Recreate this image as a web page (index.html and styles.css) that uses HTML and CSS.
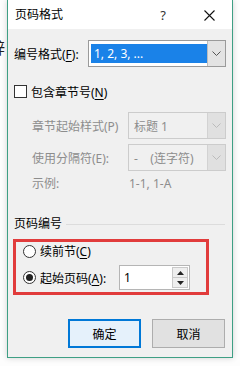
FILE: index.html
```html
<!DOCTYPE html>
<html lang="zh-CN">
<head>
    <meta charset="UTF-8">
    <title>页码格式</title>
    <link rel="stylesheet" href="styles.css">
</head>
<body>
    <div class="behind"><span>辞</span></div>
    <div class="dialog">
        <div class="titlebar">
            <span class="title">页码格式</span>
            <span class="tbtn help">?</span>
            <span class="tbtn close">
                <svg width="11" height="11" viewBox="0 0 11 11"><path d="M0.5 0.5 L10.5 10.5 M10.5 0.5 L0.5 10.5" stroke="#111" stroke-width="1.1" fill="none"/></svg>
            </span>
        </div>
        <div class="content">
            <div class="row first">
                <span class="label">编号格式(<u>F</u>):</span>
                <div class="combo focused">
                    <span class="value selected">1, 2, 3, ...</span>
                    <span class="arrow">
                        <svg width="9" height="5" viewBox="0 0 9 5"><path d="M0.5 0.5 L4.5 4.5 L8.5 0.5" stroke="#555" fill="none"/></svg>
                    </span>
                </div>
            </div>

            <div class="check-row">
                <span class="checkbox"></span>
                <span>包含章节号(<u>N</u>)</span>
            </div>

            <div class="sub">
                <div class="row">
                    <span class="label wide">章节起始样式(P)</span>
                    <div class="combo disabled">
                        <span class="value">标题 1</span>
                        <span class="arrow">
                            <svg width="9" height="5" viewBox="0 0 9 5"><path d="M0.5 0.5 L4.5 4.5 L8.5 0.5" stroke="#bbb" fill="none"/></svg>
                        </span>
                    </div>
                </div>
                <div class="row second">
                    <span class="label wide">使用分隔符(E):</span>
                    <div class="combo disabled">
                        <span class="value">-&nbsp;&nbsp;&nbsp;&nbsp;(连字符)</span>
                        <span class="arrow">
                            <svg width="9" height="5" viewBox="0 0 9 5"><path d="M0.5 0.5 L4.5 4.5 L8.5 0.5" stroke="#bbb" fill="none"/></svg>
                        </span>
                    </div>
                </div>
                <div class="example">
                    <span class="label wide">示例:</span>
                    <span>1-1, 1-A</span>
                </div>
            </div>

            <div class="group-title">
                <span>页码编号</span>
                <span class="line"></span>
            </div>

            <div class="marked">
                <div class="radio-row">
                    <span class="radio"></span>
                    <span>续前节(<u>C</u>)</span>
                </div>
                <div class="radio-row start">
                    <span class="radio on"></span>
                    <span class="start-label">起始页码(<u>A</u>):</span>
                    <div class="spin">
                        <span class="spin-value">1</span>
                        <span class="spin-btns">
                            <span class="spin-btn">
                                <svg width="7" height="4" viewBox="0 0 7 4"><path d="M0 4 L3.5 0 L7 4 Z" fill="#222"/></svg>
                            </span>
                            <span class="spin-btn">
                                <svg width="7" height="4" viewBox="0 0 7 4"><path d="M0 0 L3.5 4 L7 0 Z" fill="#222"/></svg>
                            </span>
                        </span>
                    </div>
                </div>
            </div>

            <div class="buttons">
                <button class="btn default">确定</button>
                <button class="btn">取消</button>
            </div>
        </div>
    </div>
</body>
</html>
```

FILE: styles.css
```css
* {
    box-sizing: border-box;
}
body {
    margin: 0;
    width: 240px;
    height: 366px;
    overflow: hidden;
    display: flex;
    align-items: flex-start;
    background-color: #fdfdfd;
    font-family: "Noto Sans", "Noto Sans CJK SC", sans-serif;
    font-size: 12px;
    color: #000;
}
.behind {
    width: 7px;
    overflow: hidden;
    padding-top: 39px;
    font-size: 16px;
    line-height: 18px;
    color: #222;
}
.behind span {
    display: block;
    margin-left: -11px;
}
.dialog {
    width: 226px;
    height: 358px;
    border: 1px solid #3e9f84;
    border-top: none;
    background-color: #f0f0f0;
    box-shadow: 0 0 6px rgba(0, 0, 0, 0.18);
    display: flex;
    flex-direction: column;
}
.titlebar {
    height: 29px;
    background-color: #fff;
    display: flex;
    align-items: center;
}
.title {
    flex: 1;
    padding-left: 7px;
    line-height: 14px;
}
.tbtn {
    width: 46px;
    height: 29px;
    display: flex;
    align-items: center;
    justify-content: center;
}
.help {
    font-size: 13px;
    color: #333;
    padding-top: 1px;
}
.close svg {
    margin-top: 1px;
}
.content {
    flex: 1;
    padding: 11px 6px 0 6px;
    display: flex;
    flex-direction: column;
}
.row {
    display: flex;
    align-items: center;
    height: 27px;
}
.label {
    width: 74px;
    flex-shrink: 0;
}
.label.wide {
    width: 96px;
}
.combo {
    flex: 1;
    height: 27px;
    display: flex;
    align-items: stretch;
    border: 1px solid #adadad;
    background-color: #fff;
}
.combo .value {
    flex: 1;
    display: flex;
    align-items: center;
    padding-left: 4px;
}
.combo .selected {
    margin: 3px 0 3px 2px;
    padding-left: 3px;
    background-color: #1a82e8;
    color: #fff;
}
.combo .arrow {
    width: 18px;
    display: flex;
    align-items: center;
    justify-content: center;
    background-color: #dadada;
    border-left: 1px solid #c4c4c4;
}
.combo.focused {
    border-color: #9a9a9a;
}
.combo.focused .arrow {
    background-color: #e3e3e3;
    border-left: 1px solid #bcbcbc;
}
.combo.disabled {
    border-color: #cccccc;
    background-color: #f0f0f0;
    color: #8d8d8d;
}
.combo.disabled .value {
    padding-left: 5px;
}
.combo.disabled .arrow {
    background-color: #e0e0e0;
    border-left: 1px solid #d2d2d2;
}
.check-row {
    display: flex;
    align-items: center;
    height: 13px;
    margin-top: 18px;
}
.checkbox {
    width: 13px;
    height: 13px;
    border: 1px solid #333;
    background-color: #fff;
    margin-right: 4px;
}
.sub {
    padding-left: 18px;
    margin-top: 14px;
    color: #8d8d8d;
}
.sub .row.second {
    margin-top: 5px;
}
.example {
    display: flex;
    align-items: center;
    height: 16px;
    margin-top: 4px;
    margin-right: 1px;
}
.example .label {
    width: 97px;
}
.group-title {
    display: flex;
    align-items: center;
    height: 16px;
    margin-top: 24px;
}
.group-title .line {
    flex: 1;
    height: 1px;
    margin: 2px 1px 0 4px;
    background-color: #dcdcdc;
}
.marked {
    width: 196px;
    height: 56px;
    margin: 8px 0 0 -1px;
    border: 3px solid #e13c3c;
    padding: 2px 0 0 7px;
}
.radio-row {
    display: flex;
    align-items: center;
    height: 14px;
}
.radio-row.start {
    height: 25px;
    margin-top: 7px;
}
.radio {
    width: 13px;
    height: 13px;
    border: 1px solid #333;
    border-radius: 50%;
    background-color: #fff;
    margin-right: 4px;
    display: flex;
    align-items: center;
    justify-content: center;
}
.radio.on::after {
    content: "";
    width: 7px;
    height: 7px;
    border-radius: 50%;
    background-color: #222;
}
.start-label {
    width: 79px;
}
.spin {
    width: 71px;
    height: 25px;
    border: 1px solid #b5b5b5;
    background-color: #fff;
    display: flex;
}
.spin-value {
    flex: 1;
    padding-left: 4px;
    display: flex;
    align-items: center;
}
.spin-btns {
    width: 17px;
    padding: 1px 1px 1px 0;
    display: flex;
    flex-direction: column;
}
.spin-btn {
    flex: 1;
    display: flex;
    align-items: center;
    justify-content: center;
    border: 1px solid #c9c9c9;
    background-color: #eeeeee;
}
.spin-btn + .spin-btn {
    border-top: none;
}
.buttons {
    display: flex;
    justify-content: flex-end;
    gap: 11px;
    margin-top: 24px;
    padding-right: 1px;
}
.btn {
    width: 73px;
    height: 29px;
    font-family: inherit;
    font-size: 12px;
    color: #000;
    border: 1px solid #adadad;
    background-color: #e1e1e1;
    padding: 0;
}
.btn.default {
    border: 2px solid #0078d7;
    background-color: #e5f1fb;
}
u {
    text-decoration-thickness: 1px;
    text-underline-offset: 2px;
}
```
